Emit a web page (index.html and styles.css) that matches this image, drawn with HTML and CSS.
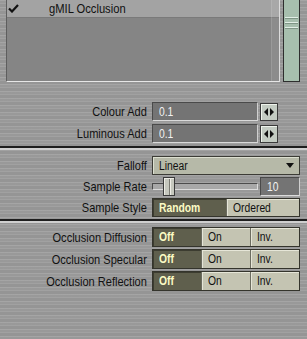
FILE: index.html
```html
<!DOCTYPE html>
<html lang="en">
<head>
  <meta charset="UTF-8" />
  <title>gMIL Occlusion</title>
  <link rel="stylesheet" href="styles.css">
</head>
<body>

<div class="list-area">
  <div class="list">
    <div class="list-row selected">
      <svg class="check" width="11" height="9" viewBox="0 0 11 9"><path d="M1 4.5 L4 7.5 L10 1" fill="none" stroke="#111" stroke-width="2.2"/></svg>
      <span class="name t">gMIL Occlusion</span>
    </div>
    <div class="list-col"></div>
  </div>
  <div class="scrollbar">
    <div class="grip"></div>
  </div>
</div>

<div class="group first">
  <div class="row">
    <span class="label">Colour Add</span>
    <div class="field"><span class="t">0.1</span></div>
    <div class="spin"><svg width="10" height="8" viewBox="0 0 10 8"><path d="M0 4 L4 0 L4 8 Z M6 0 L10 4 L6 8 Z" fill="#111"/></svg></div>
  </div>
  <div class="row">
    <span class="label">Luminous Add</span>
    <div class="field"><span class="t">0.1</span></div>
    <div class="spin"><svg width="10" height="8" viewBox="0 0 10 8"><path d="M0 4 L4 0 L4 8 Z M6 0 L10 4 L6 8 Z" fill="#111"/></svg></div>
  </div>
</div>

<div class="divider"></div>

<div class="group second">
  <div class="row">
    <span class="label">Falloff</span>
    <div class="select">
      <span class="t">Linear</span>
      <svg width="8" height="5" viewBox="0 0 8 5"><path d="M0 0 L8 0 L4 5 Z" fill="#111"/></svg>
    </div>
  </div>
  <div class="row">
    <span class="label">Sample Rate</span>
    <div class="slider">
      <div class="track"></div>
      <div class="thumb"></div>
    </div>
    <div class="field num"><span class="t">10</span></div>
  </div>
  <div class="row">
    <span class="label">Sample Style</span>
    <div class="choice">
      <span class="opt on"><span class="t">Random</span></span>
      <span class="opt"><span class="t">Ordered</span></span>
    </div>
  </div>
</div>

<div class="divider"></div>

<div class="group third">
  <div class="row tall">
    <span class="label">Occlusion Diffusion</span>
    <div class="choice">
      <span class="opt on"><span class="t">Off</span></span>
      <span class="opt"><span class="t">On</span></span>
      <span class="opt"><span class="t">Inv.</span></span>
    </div>
  </div>
  <div class="row tall">
    <span class="label">Occlusion Specular</span>
    <div class="choice">
      <span class="opt on"><span class="t">Off</span></span>
      <span class="opt"><span class="t">On</span></span>
      <span class="opt"><span class="t">Inv.</span></span>
    </div>
  </div>
  <div class="row tall">
    <span class="label">Occlusion Reflection</span>
    <div class="choice">
      <span class="opt on"><span class="t">Off</span></span>
      <span class="opt"><span class="t">On</span></span>
      <span class="opt"><span class="t">Inv.</span></span>
    </div>
  </div>
</div>

</body>
</html>
```

FILE: styles.css
```css
body {
  margin: 0;
  width: 307px;
  height: 339px;
  overflow: hidden;
  font-family: "Liberation Sans", Arial, sans-serif;
  font-size: 12px;
  color: #111;
  background: #9e9e9e repeating-linear-gradient(180deg, rgba(255,255,255,0.07) 0 1px, rgba(0,0,0,0.03) 1px 3px, rgba(255,255,255,0.03) 3px 4px, rgba(0,0,0,0.06) 4px 7px);
}

/* narrow lettering, like the app's condensed font */
.t { display: inline-block; transform: scaleX(0.86); transform-origin: left center; white-space: nowrap; }

/* list */
.list-area { display: flex; height: 83px; padding-left: 6px; }
.list { position: relative; width: 272px; height: 81px; background: #858585; border-left: 1px solid #5e5e5e; border-right: 1px solid #dcdcdc; border-bottom: 1px solid #e6e6e6; }
.list-row { display: flex; align-items: center; height: 17px; }
.list-row.selected { background: #a3a3a3; border-bottom: 1px solid #7a7a7a; }
.check { margin-left: 1px; }
.name { margin-left: 30px; font-size: 13px; transform: scaleX(0.86); }
.list-col { position: absolute; top: 0; right: 0; width: 7px; height: 81px; background: rgba(255,255,255,0.06); border-left: 1px solid rgba(255,255,255,0.12); }
.scrollbar { margin-left: 3px; width: 15px; height: 81px; background: #a7bfae; border: 1px solid #2e2e2e; border-top: none; }
.grip { margin: 17px 1px 0; height: 15px; background: repeating-linear-gradient(180deg, #e2efe6 0 1px, #7f9686 1px 2px, transparent 2px 5px); }

/* rows */
.group.first { margin-top: 19px; }
.group.second { margin-top: 6px; }
.group.third { margin-top: 4px; }
.row { display: flex; align-items: center; height: 19px; margin-bottom: 3px; }
.second .row { margin-bottom: 2px; }
.row.tall { height: 20px; margin-bottom: 2px; }
.label { box-sizing: border-box; width: 152px; padding-right: 6px; text-align: right; white-space: nowrap; font-size: 13px; transform: scaleX(0.85); transform-origin: right center; }

.field { box-sizing: border-box; width: 106px; height: 19px; padding: 2px 0 0 6px; background: #747474; color: #f2f2f2; border-top: 1px solid #4a4a4a; border-left: 1px solid #4a4a4a; border-bottom: 1px solid #dadada; border-right: 1px solid #cfcfcf; }
.spin { box-sizing: border-box; display: flex; align-items: center; justify-content: center; width: 18px; height: 18px; margin-left: 2px; background: #c3cbc2; border: 1px solid #3a3a3a; box-shadow: inset 1px 1px #eef3ec; }

.divider { height: 2px; background: #1e1e1e; border-bottom: 2px solid #cfcfcf; }

.select { box-sizing: border-box; display: flex; align-items: center; justify-content: space-between; width: 148px; height: 19px; padding: 0 5px 0 6px; background: #b6b9a8; border: 1px solid #3c3c36; box-shadow: inset 1px 1px #dcdfd0; }

.slider { position: relative; width: 106px; height: 19px; }
.track { position: absolute; left: 0; right: 0; top: 6px; height: 5px; background: #a8a8a8; border-top: 1px solid #4c4c4c; border-left: 1px solid #4c4c4c; border-bottom: 1px solid #dcdcdc; border-right: 1px solid #dcdcdc; }
.thumb { position: absolute; left: 11px; top: 0; box-sizing: border-box; width: 12px; height: 19px; background: #c6c8be linear-gradient(90deg, transparent 5px, #7a7a72 5px 6px, #eeeee6 6px 7px, transparent 7px); border: 1px solid #3a3a3a; box-shadow: inset 1px 1px #ecece4; }
.field.num { width: 40px; margin-left: 2px; }

.choice { display: flex; box-sizing: border-box; width: 148px; height: 100%; border: 1px solid #34342c; }
.opt { box-sizing: border-box; flex: 1; display: flex; align-items: center; padding-left: 6px; background: #c4c4b2; border-left: 1px solid #6c6c60; box-shadow: inset 1px 1px #e6e6d8; }
.opt:first-child { border-left: none; }
.opt.on { background: #5f5f4d; color: #fbfbc4; font-weight: bold; box-shadow: inset 1px 1px #3c3c30; }
```
